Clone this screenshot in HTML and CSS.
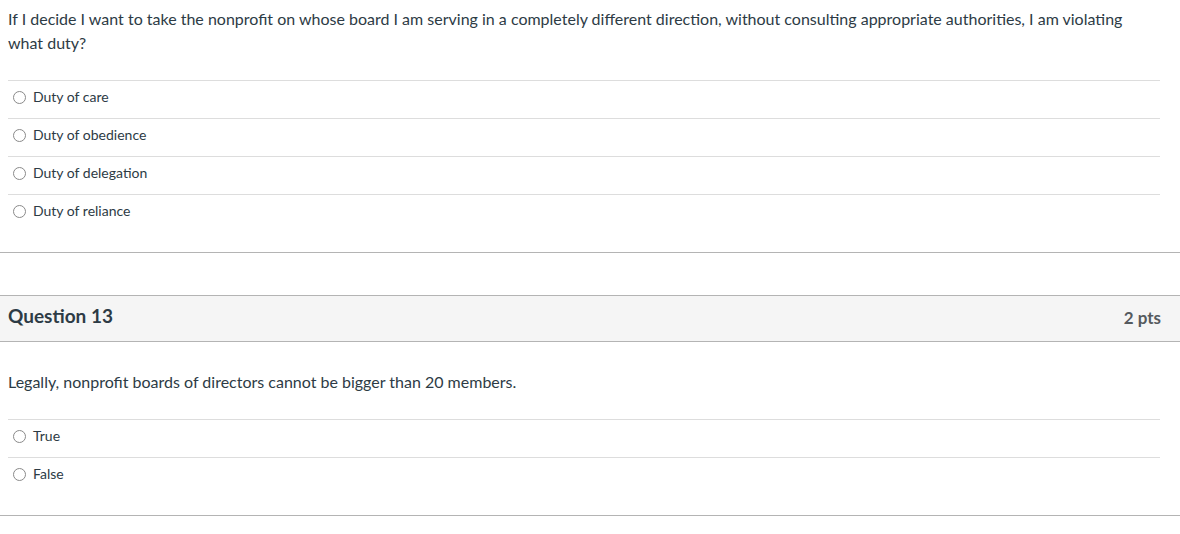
FILE: index.html
```html
<!DOCTYPE html>
<html lang="en">
<head>
<meta charset="utf-8">
<title>Quiz</title>
<link rel="stylesheet" href="styles.css">
</head>
<body>
<div class="quiz">
  <div class="question">
    <div class="question-text question-text--continued">If I decide I want to take the nonprofit on whose board I am serving in a completely different direction, without consulting appropriate authorities, I am violating what duty?</div>
    <div class="answers">
      <label class="answer"><span class="radio"></span><span class="answer-label">Duty of care</span></label>
      <label class="answer"><span class="radio"></span><span class="answer-label">Duty of obedience</span></label>
      <label class="answer"><span class="radio"></span><span class="answer-label">Duty of delegation</span></label>
      <label class="answer"><span class="radio"></span><span class="answer-label">Duty of reliance</span></label>
    </div>
  </div>

  <div class="question">
    <div class="question-header">
      <h2 class="question-title">Question 13</h2>
      <span class="question-points">2 pts</span>
    </div>
    <div class="question-text">Legally, nonprofit boards of directors cannot be bigger than 20 members.</div>
    <div class="answers">
      <label class="answer"><span class="radio"></span><span class="answer-label">True</span></label>
      <label class="answer"><span class="radio"></span><span class="answer-label">False</span></label>
    </div>
  </div>
</div>
</body>
</html>
```

FILE: styles.css
```css
html, body {
  margin: 0;
  padding: 0;
  background: #ffffff;
}

body {
  font-family: Lato, "Open Sans", "Liberation Sans", sans-serif;
  color: #2d3b45;
}

.quiz {
  width: 1180px;
}

.question {
  border-bottom: 1px solid #b4b4b4;
  margin-bottom: 42px;
}

.question-header {
  display: flex;
  align-items: center;
  justify-content: space-between;
  height: 39px;
  padding: 0 19px 6px 8px;
  background: #f5f5f5;
  border-top: 1px solid #b4b4b4;
  border-bottom: 1px solid #b4b4b4;
}

.question-title {
  margin: 0;
  font-size: 19px;
  font-weight: 700;
  color: #2d3b45;
}

.question-points {
  font-size: 17px;
  font-weight: 700;
  color: #555a5e;
  padding-top: 4px;
}

.question-text {
  padding: 28px 20px 25px 8px;
  font-size: 16px;
  line-height: 24px;
}

.question-text--continued {
  padding-top: 7px;
}

.answers {
  margin: 0 20px 20px 8px;
}

.answer {
  display: flex;
  align-items: center;
  gap: 7px;
  height: 32px;
  padding: 0 0 5px 5px;
  border-top: 1px solid #dddddd;
  font-size: 14px;
}

.radio {
  width: 11px;
  height: 11px;
  border: 1px solid #8a8a8a;
  border-radius: 50%;
  background: #ffffff;
  flex: none;
}

.answer-label {
  line-height: 18px;
}
```
